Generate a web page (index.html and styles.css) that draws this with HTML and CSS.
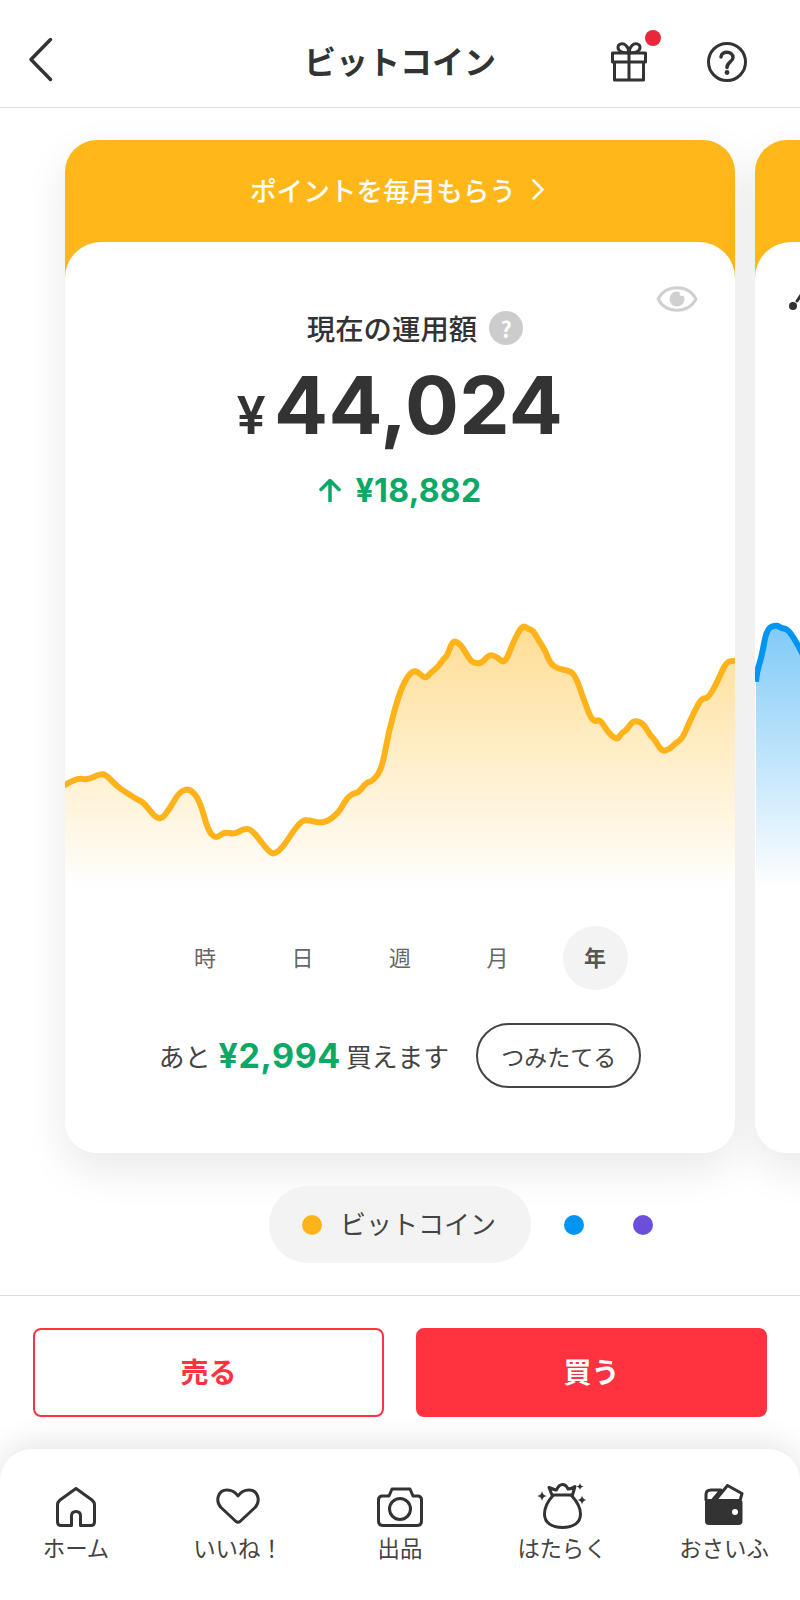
FILE: index.html
```html
<!DOCTYPE html>
<html lang="ja">
<head>
    <meta charset="UTF-8">
    <meta name="viewport" content="width=device-width, initial-scale=1.0">
    <title>ビットコイン</title>
    <link rel="stylesheet" href="styles.css">
</head>
<body>
    <div class="page">
        <!-- Header -->
        <header class="top-bar">
            <svg class="back-icon" viewBox="0 0 25 45"><path d="M22.5 2.5 L3 22.5 L22.5 42.5"/></svg>
            <h1 class="title">ビットコイン</h1>
            <div class="gift">
                <svg class="gift-icon" viewBox="0 0 36 40">
                    <path d="M1.5 11 H34.5 V20 H1.5 Z M3.5 20 V38 H32.5 V20 M18 11 V38"/>
                    <path d="M18 11 C14 11 7 10 7 5.5 C7 1.5 12 0.5 15 3.5 C17 5.5 18 8 18 11 C18 8 19 5.5 21 3.5 C24 0.5 29 1.5 29 5.5 C29 10 22 11 18 11"/>
                </svg>
                <span class="gift-dot"></span>
            </div>
            <svg class="help-icon" viewBox="0 0 44 44">
                <circle cx="22" cy="22" r="18.5"/>
                <path class="help-mark" d="M16 17 C16 10.5 28 10.5 28 17.5 C28 22 22 22 22 27.5"/>
                <circle class="help-dot" cx="22" cy="32.5" r="2.4"/>
            </svg>
        </header>

        <!-- Cards -->
        <div class="carousel">
            <section class="card">
                <div class="card-head">ポイントを毎月もらう
                    <svg class="head-arrow" viewBox="0 0 12 21"><path d="M1.5 1.5 L10.5 10.5 L1.5 19.5"/></svg>
                </div>
                <div class="card-body">
                    <svg class="eye-icon" viewBox="0 0 42 28">
                        <path d="M2 14 C10 -1 32 -1 40 14 C32 29 10 29 2 14 Z"/>
                        <circle class="eye-pupil" cx="21" cy="14" r="7.5"/>
                        <circle class="eye-shine" cx="26" cy="8.5" r="2.5"/>
                    </svg>
                    <div class="label-row">
                        <span class="label">現在の運用額</span>
                        <span class="hint">?</span>
                    </div>
                    <div class="amount"><span class="yen">¥</span>44,024</div>
                    <div class="change">
                        <svg class="up-icon" viewBox="0 0 22 24"><path d="M11 23 V3 M2 11.5 L11 2.5 L20 11.5"/></svg>
                        ¥18,882
                    </div>
                    <svg class="chart" viewBox="65 600 670 300">
                        <defs>
                            <linearGradient id="fillGold" gradientUnits="userSpaceOnUse" x1="0" y1="625" x2="0" y2="890">
                                <stop offset="0" stop-color="#ffb71a" stop-opacity="0.47"/>
                                <stop offset="1" stop-color="#ffb71a" stop-opacity="0"/>
                            </linearGradient>
                        </defs>
                        <path id="goldArea" class="chart-area" fill="url(#fillGold)"/>
                        <path id="goldLine" class="gold-line"/>
                    </svg>
                    <div class="ranges">
                        <span class="range">時</span>
                        <span class="range">日</span>
                        <span class="range">週</span>
                        <span class="range">月</span>
                        <span class="range active">年</span>
                    </div>
                    <div class="buy-row">
                        <span>あと</span>
                        <span class="left-amount">¥2,994</span>
                        <span>買えます</span>
                        <span class="plan-btn">つみたてる</span>
                    </div>
                </div>
            </section>

            <!-- Next card, only its edge is on screen -->
            <section class="card">
                <div class="card-head"></div>
                <div class="card-body">
                    <svg class="peek-mark" viewBox="0 0 14 20">
                        <circle cx="5" cy="14" r="4"/>
                        <path d="M9 9 L13 3"/>
                    </svg>
                    <svg class="chart chart-next" viewBox="755 600 670 300">
                        <defs>
                            <linearGradient id="fillBlue" gradientUnits="userSpaceOnUse" x1="0" y1="625" x2="0" y2="890">
                                <stop offset="0" stop-color="#0095f0" stop-opacity="0.5"/>
                                <stop offset="1" stop-color="#0095f0" stop-opacity="0"/>
                            </linearGradient>
                        </defs>
                        <path id="blueArea" class="chart-area" fill="url(#fillBlue)"/>
                        <path id="blueLine" class="blue-line"/>
                    </svg>
                </div>
            </section>
        </div>

        <!-- Card selector -->
        <div class="selector">
            <div class="pill"><span class="dot gold"></span><span class="pill-text">ビットコイン</span></div>
            <span class="dot-slot"><span class="dot blue"></span></span>
            <span class="dot-slot"><span class="dot purple"></span></span>
        </div>

        <!-- Sell / buy -->
        <div class="actions">
            <button class="trade-btn sell">売る</button>
            <button class="trade-btn buy">買う</button>
        </div>

        <!-- Bottom navigation -->
        <nav class="tab-bar">
            <div class="tab">
                <svg class="tab-home" width="40" height="40" viewBox="0 0 40 40">
                    <path d="M20 1.5 L4 13 Q1.5 15 1.5 18 V35 Q1.5 38.5 5 38.5 H15.5 V29 Q15.5 24.5 20 24.5 Q24.5 24.5 24.5 29 V38.5 H35 Q38.5 38.5 38.5 35 V18 Q38.5 15 36 13 Z"/>
                </svg>
                <span>ホーム</span>
            </div>
            <div class="tab">
                <svg class="tab-heart" width="44" height="40" viewBox="0 0 44 40">
                    <path d="M20 35.5 Q22 37 24 35.5 L39 21.5 C45 15 42 4 33 4 C28 4 24 7 22 10 C20 7 16 4 11 4 C2 4 -1 15 5 21.5 Z"/>
                </svg>
                <span>いいね！</span>
            </div>
            <div class="tab">
                <svg class="tab-camera" width="46" height="40" viewBox="0 0 46 40">
                    <path d="M1.5 13 Q1.5 9 5.5 9 H12 L15 2 H33 L36 9 H40.5 Q44.5 9 44.5 13 V34 Q44.5 38.5 40 38.5 H6 Q1.5 38.5 1.5 34 Z"/>
                    <circle cx="23" cy="22" r="10.5"/>
                </svg>
                <span>出品</span>
            </div>
            <div class="tab">
                <svg class="tab-bag" width="50" height="47" viewBox="0 0 50 47">
                    <path d="M12 4.5 Q18 7 19.5 7 Q22 1.5 25.5 1.5 Q29 1.5 31 6 Q35 6 38 3.5 L35.5 12 H15 Z"/>
                    <path d="M16 12.5 C10 19 7.5 25 7.5 31 C7.5 40 15 44.5 25.5 44.5 C36 44.5 43.5 40 43.5 31 C43.5 25 40.5 19 34.5 12.5"/>
                    <path class="spark" d="M5 8 Q5.7 12.3 10 13 Q5.7 13.7 5 18 Q4.3 13.7 0 13 Q4.3 12.3 5 8 Z"/>
                    <path class="spark" d="M43 0 Q43.5 3 46.5 3.5 Q43.5 4 43 7 Q42.5 4 39.5 3.5 Q42.5 3 43 0 Z"/>
                    <path class="spark" d="M45 12.5 Q45.6 16.4 49.5 17 Q45.6 17.6 45 21.5 Q44.4 17.6 40.5 17 Q44.4 16.4 45 12.5 Z"/>
                </svg>
                <span>はたらく</span>
            </div>
            <div class="tab">
                <svg class="tab-wallet" width="40" height="42" viewBox="0 0 40 42">
                    <path d="M2 16 V10.5 Q2 6 7 6 H17 L9 15.5"/>
                    <path d="M12 15.5 L23.5 1.5 L38 9.5 L36.5 15"/>
                    <rect class="wallet-body" x="1" y="15" width="37.5" height="26" rx="4"/>
                    <circle class="wallet-dot" cx="31" cy="28" r="3"/>
                </svg>
                <span>おさいふ</span>
            </div>
        </nav>
    </div>
    <script src="chart.js"></script>
</body>
</html>
```

FILE: styles.css
```css
* {
    box-sizing: border-box;
}
body {
    margin: 0;
    background-color: #ffffff;
    color: #333333;
    font-family: "Noto Sans CJK JP", "Noto Sans", sans-serif;
}
svg {
    display: block;
    fill: none;
    stroke: #333333;
    stroke-width: 3;
    stroke-linecap: round;
    stroke-linejoin: round;
}
.page {
    width: 800px;
    height: 1600px;
    overflow: hidden;
}

/* Header */
.top-bar {
    display: flex;
    align-items: center;
    height: 108px;
    padding: 16px 0 0 28px;
    border-bottom: 1px solid #dddddd;
}
.back-icon {
    width: 25px;
    height: 45px;
    margin-top: -4px;
    stroke-width: 3.5;
}
.title {
    width: 190px;
    margin: -4px 0 0 251px;
    font-size: 32px;
    font-weight: 700;
    line-height: 40px;
    white-space: nowrap;
}
.gift {
    position: relative;
    margin-left: 117px;
}
.gift-icon {
    width: 36px;
    height: 40px;
}
.gift-dot {
    position: absolute;
    top: -12px;
    left: 34px;
    width: 16px;
    height: 16px;
    border-radius: 50%;
    background-color: #e8283a;
}
.help-icon {
    width: 44px;
    height: 44px;
    margin-left: 58px;
}
.help-mark {
    stroke-width: 3.5;
}
.help-dot {
    fill: #333333;
    stroke: none;
}

/* Cards */
.carousel {
    display: flex;
    gap: 20px;
    padding: 32px 0 0 65px;
}
.card {
    flex: 0 0 670px;
    border-radius: 32px;
    background: linear-gradient(#ffb71a 0, #ffb71a 150px, #ffffff 150px);
    box-shadow: 0 16px 44px rgba(0, 0, 0, 0.09);
}
.card-head {
    display: flex;
    align-items: center;
    justify-content: center;
    gap: 16px;
    height: 102px;
    padding: 0 6px 4px 0;
    color: #ffffff;
    font-size: 26.6px;
    font-weight: 500;
}
.head-arrow {
    width: 12px;
    height: 21px;
    stroke: #ffffff;
    stroke-width: 2.5;
}
.card-body {
    position: relative;
    height: 911px;
    padding-top: 66px;
    border-radius: 36px 36px 32px 32px;
    background-color: #ffffff;
}
.eye-icon {
    position: absolute;
    top: 43px;
    right: 37px;
    width: 42px;
    height: 28px;
    stroke: #d0d0d0;
}
.eye-pupil {
    fill: #d0d0d0;
    stroke: none;
}
.eye-shine {
    fill: #ffffff;
    stroke: none;
}
.label-row {
    display: flex;
    align-items: center;
    justify-content: center;
    gap: 12px;
    height: 40px;
    padding-left: 30px;
}
.label {
    font-size: 28.4px;
    font-weight: 500;
    line-height: 40px;
}
.hint {
    display: flex;
    align-items: center;
    justify-content: center;
    width: 34px;
    height: 34px;
    border-radius: 50%;
    background-color: #cccccc;
    color: #ffffff;
    font-size: 22px;
    font-weight: 700;
}
.amount {
    display: flex;
    align-items: baseline;
    justify-content: center;
    height: 80px;
    margin-top: 17px;
    font-family: Inter, "Liberation Sans", sans-serif;
    font-size: 80px;
    font-weight: 700;
    line-height: 80px;
    letter-spacing: 0.4px;
}
.yen {
    margin-right: 8px;
    font-size: 52px;
    font-weight: 600;
    letter-spacing: 0;
}
.change {
    display: flex;
    align-items: center;
    justify-content: center;
    gap: 15px;
    height: 40px;
    margin-top: 25px;
    color: #0ba866;
    font-family: Inter, "Liberation Sans", sans-serif;
    font-size: 32px;
    font-weight: 700;
    letter-spacing: 0.3px;
}
.up-icon {
    width: 22px;
    height: 24px;
    stroke: #0ba866;
    stroke-width: 3.5;
}
.chart {
    width: 670px;
    height: 300px;
    margin-top: 90px;
    overflow: hidden;
}
.chart-next {
    margin-top: 0;
    position: absolute;
    top: 358px;
    left: 0;
}
.chart-area {
    stroke: none;
}
.gold-line {
    stroke: #ffb31a;
    stroke-width: 6;
}
.blue-line {
    stroke: #0095f0;
    stroke-width: 6;
    stroke-linecap: butt;
}
.peek-mark {
    position: absolute;
    top: 50px;
    left: 33px;
    width: 14px;
    height: 20px;
}
.peek-mark circle {
    fill: #333333;
    stroke: none;
}
.ranges {
    display: flex;
    justify-content: center;
    gap: 32.5px;
    margin-top: 26px;
}
.range {
    display: flex;
    align-items: center;
    justify-content: center;
    width: 65px;
    height: 64px;
    padding-bottom: 4px;
    border-radius: 50%;
    color: #666666;
    font-size: 22px;
}
.range.active {
    background-color: #f3f3f3;
    color: #555555;
    font-weight: 700;
}
.buy-row {
    display: flex;
    align-items: center;
    justify-content: center;
    height: 65px;
    margin-top: 33px;
    color: #444444;
    font-size: 25.8px;
}
.left-amount {
    margin: 0 5px 0 8px;
    color: #0ba866;
    font-family: Inter, "Liberation Sans", sans-serif;
    font-size: 34px;
    font-weight: 700;
    letter-spacing: 0.6px;
}
.plan-btn {
    display: flex;
    align-items: center;
    justify-content: center;
    width: 165px;
    height: 65px;
    margin-left: 27px;
    border: 2px solid #444444;
    border-radius: 33px;
    font-size: 23px;
}

/* Card selector */
.selector {
    display: flex;
    align-items: center;
    margin: 33px 0 0 269px;
}
.pill {
    display: flex;
    align-items: center;
    gap: 18px;
    width: 262px;
    height: 77px;
    padding-left: 33px;
    border-radius: 39px;
    background-color: #f3f3f3;
    color: #444444;
    font-size: 26px;
}
.pill-text {
    margin-bottom: 4px;
}
.dot {
    width: 20px;
    height: 20px;
    border-radius: 50%;
}
.dot-slot {
    display: flex;
    justify-content: center;
    width: 69px;
}
.pill + .dot-slot {
    margin-left: 8px;
}
.gold {
    background-color: #ffb31a;
}
.blue {
    background-color: #0095f0;
}
.purple {
    background-color: #6b4fdc;
}

/* Sell / buy */
.actions {
    display: flex;
    gap: 32px;
    margin-top: 32px;
    padding: 32px 33px;
    border-top: 1px solid #dddddd;
}
.trade-btn {
    flex: 1;
    height: 89px;
    padding-bottom: 4px;
    border: 2px solid #ff3340;
    border-radius: 8px;
    font-family: inherit;
    font-size: 28px;
    font-weight: 700;
}
.sell {
    background-color: #ffffff;
    color: #ff3340;
}
.buy {
    background-color: #ff3340;
    color: #ffffff;
}

/* Bottom navigation */
.tab-bar {
    display: grid;
    grid-template-columns: repeat(5, 162px);
    justify-content: center;
    height: 151px;
    padding-top: 34px;
    border-radius: 32px 32px 0 0;
    background-color: #ffffff;
    box-shadow: 0 -6px 30px rgba(0, 0, 0, 0.1);
}
.tab {
    display: flex;
    flex-direction: column;
    align-items: center;
    color: #444444;
    font-size: 22.4px;
    line-height: 32px;
}
.tab-home, .tab-camera {
    margin: 4px 0;
}
.tab-heart {
    margin: 3px 0 5px;
}
.tab-bag {
    margin-bottom: 1px;
}
.tab-wallet {
    margin: 1px 0 5px;
}
.spark {
    fill: #333333;
    stroke: none;
}
.wallet-body {
    fill: #333333;
    stroke: none;
}
.wallet-dot {
    fill: #ffffff;
    stroke: none;
}
```

FILE: chart.js
```js
// Price points in page pixels: x, y
const goldPoints = [
    [65,785],[76.7,777.7],[87.3,780],[100,774],[106,774.7],[116.7,786],[125,791.7],[136.7,799.3],[143.3,802],
    [159.3,822.3],[170,808.3],[179.3,791.7],[190,788.3],[200,801],[208.3,831.7],[216.7,838.7],[224,831.7],
    [235,834.3],[243.3,828.7],[251.7,829.3],[266.7,849.3],[274,855],[283.3,846.7],[291.7,833.3],[301.7,820.7],
    [308.3,820],[318.3,822.7],[326.7,821.7],[338.3,813.3],[346.7,798.3],[353.3,793.3],[358.3,792.7],[366.7,782.3],
    [371.7,781.7],[381.7,770],[388.3,733.3],[399,694],[406.7,677.3],[415,669],[425,679],[430,673.3],[438.3,666.7],
    [443.3,659],[446.7,656.7],[452.7,640.7],[458.3,642.7],[463.3,648.3],[470,660],[475,663.3],[481.7,663.3],
    [489.3,654.3],[496.7,656.7],[505,664],[513.3,641.7],[522.3,625],[528.3,629],[533.3,630.7],[538.3,640],[545,650],
    [550,663.3],[558.3,669],[566.7,670],[575,674],[585,703.3],[592.7,722.3],[600,719],[606.7,730.7],[616.7,740.7],
    [621.7,732.7],[626.7,730],[633.3,720],[643.3,723.3],[650,735],[655,740],[661.7,751.7],[670,749],[675,743.3],
    [681.7,739.3],[688.3,725],[695,710],[701.7,698.3],[708.3,698.3],[718.3,680],[726,661.7],[735,660.7]
];
const bluePoints = [
    [756,681.7],[756.7,671.7],[761.7,656.7],[766.7,628.3],[776.7,625],[781.7,628.3],[788.3,629.3],[800,648.3],[820,690]
];

// Curve through the midpoints so the line has no hard corners
function linePath(points) {
    let d = `M${points[0][0]} ${points[0][1]}`;
    for (let i = 1; i < points.length - 1; i++) {
        const [x, y] = points[i];
        const midX = (x + points[i + 1][0]) / 2;
        const midY = (y + points[i + 1][1]) / 2;
        d += ` Q${x} ${y} ${midX} ${midY}`;
    }
    const last = points[points.length - 1];
    return `${d} L${last[0]} ${last[1]}`;
}

function drawChart(points, name) {
    const d = linePath(points);
    document.getElementById(`${name}Line`).setAttribute('d', d);
    document.getElementById(`${name}Area`).setAttribute('d', `${d} V900 H${points[0][0]} Z`);
}

drawChart(goldPoints, 'gold');
drawChart(bluePoints, 'blue');
```
